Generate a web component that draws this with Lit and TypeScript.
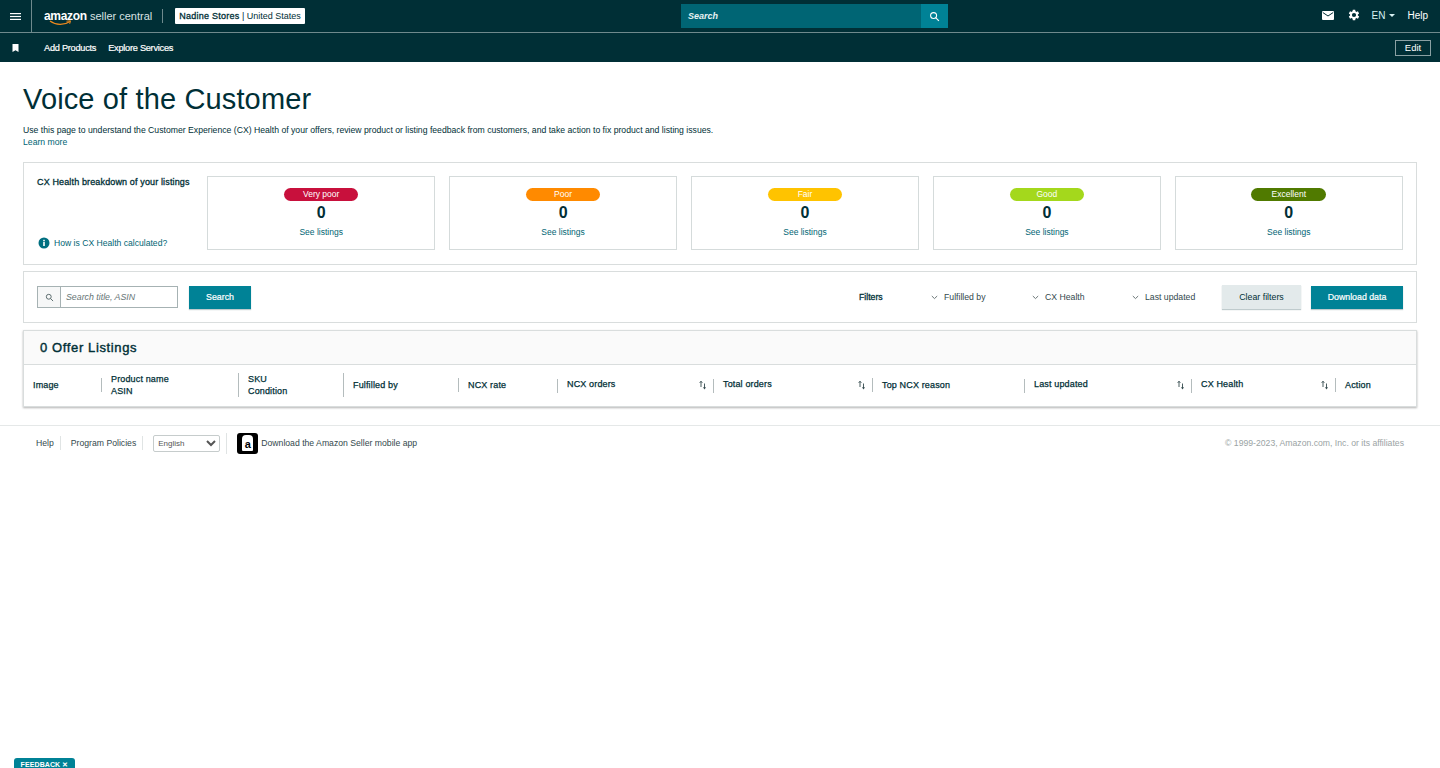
import { LitElement, html, css, svg } from "lit";
import { customElement } from "lit/decorators.js";

const HEALTH = [
  { label: "Very poor", color: "#c8103c" },
  { label: "Poor", color: "#ff8a00" },
  { label: "Fair", color: "#ffc300" },
  { label: "Good", color: "#a4d81c" },
  { label: "Excellent", color: "#507a00" },
];

// widths are the gaps between the column separators
const COLUMNS = [
  { width: 77, lines: ["Image"], first: true },
  { width: 137, lines: ["Product name", "ASIN"] },
  { width: 105, lines: ["SKU", "Condition"], tall: true },
  { width: 115, lines: ["Fulfilled by"], tall: true },
  { width: 99, lines: ["NCX rate"] },
  { width: 156, lines: ["NCX orders"], sort: true },
  { width: 159, lines: ["Total orders"], sort: true },
  { width: 152, lines: ["Top NCX reason"] },
  { width: 167, lines: ["Last updated"], sort: true },
  { width: 144, lines: ["CX Health"], sort: true },
  { width: 81, lines: ["Action"] },
];

const searchIcon = (size: number, color: string) => html`
  <svg width=${size} height=${size} viewBox="0 0 24 24" fill="none" stroke=${color} stroke-width="2.4">
    <circle cx="10" cy="10" r="6.5"></circle>
    <path d="M15 15l6.5 6.5"></path>
  </svg>
`;

const chevron = html`
  <svg class="chev" width="7" height="5" viewBox="0 0 7 5" fill="none" stroke="#6c7778" stroke-width="1">
    <path d="M.8 1l2.7 2.6L6.2 1"></path>
  </svg>
`;

const sortIcon = svg`
  <path d="M2 7V1.500M.7 2.800L2 1.200l1.300 1.600" stroke="#33494d" stroke-width=".9" fill="none"></path>
  <path d="M5.500 3.500V8" stroke="#33494d" stroke-width=".9" fill="none"></path>
  <path d="M4 7.200h3L5.500 9.500z" fill="#33494d"></path>
`;

@customElement("app-root")
export class AppRoot extends LitElement {
  static styles = css`
    :host {
      display: block;
      position: relative;
      min-height: 768px;
      overflow: hidden;
      background: #fff;
      color: #002f36;
      font-family: "Liberation Sans", Arial, sans-serif;
      font-size: 10px;
    }
    a {
      color: #006574;
      text-decoration: none;
    }

    .topbar {
      display: flex;
      align-items: center;
      height: 32px;
      background: #002f36;
      border-bottom: 1px solid #6f8a8d;
      color: #fff;
    }
    .burger {
      display: flex;
      align-items: center;
      justify-content: center;
      width: 31px;
      height: 32px;
      border-right: 1px solid #6f8a8d;
      box-sizing: content-box;
    }
    .logo {
      position: relative;
      margin-left: 12px;
      width: 118px;
      border-right: 1px solid #6f8a8d;
      height: 14px;
      display: flex;
      align-items: center;
      white-space: nowrap;
      font-size: 11px;
      color: #d9e2e3;
    }
    .logo b {
      font-size: 12px;
      color: #fff;
      letter-spacing: -0.3px;
      margin-right: 3px;
    }
    .smile {
      position: absolute;
      left: 0;
      top: 11px;
    }
    .store {
      margin-left: 12px;
      width: 130px;
      height: 16px;
      box-sizing: border-box;
      display: flex;
      align-items: center;
      justify-content: center;
      background: #fff;
      color: #002f36;
      border-radius: 1px;
      font-size: 9px;
      white-space: nowrap;
    }
    .store b {
      font-weight: 400;
      -webkit-text-stroke: 0.3px #002f36;
      letter-spacing: 0.25px;
    }
    .global-search {
      margin-left: 376px;
      display: flex;
      width: 267px;
      height: 24px;
    }
    .global-search span {
      flex: 1;
      display: flex;
      align-items: center;
      padding: 0 0 1px 7px;
      background: #006574;
      color: #e6f2f3;
      font-style: italic;
      font-weight: 700;
      font-size: 9px;
    }
    .global-search div {
      width: 27px;
      display: flex;
      align-items: center;
      justify-content: center;
      background: #008296;
    }
    .top-right {
      margin-left: auto;
      display: flex;
      align-items: center;
      padding: 0 12px 2px 0;
      font-size: 10px;
    }
    .top-right .lang {
      display: flex;
      align-items: center;
      gap: 4px;
      margin-left: 12px;
      color: #d8f1f3;
    }
    .top-right .help {
      margin-left: 12px;
    }
    .caret {
      width: 0;
      height: 0;
      border: 3px solid transparent;
      border-top-color: #d8f1f3;
      border-bottom-width: 0;
    }
    .icon-gap {
      margin-left: 14px;
      display: flex;
    }

    .subbar {
      display: flex;
      align-items: center;
      height: 29px;
      padding: 0 9px 0 12px;
      background: #002f36;
      color: #fff;
      font-size: 9.2px;
    }
    .subbar svg {
      margin-right: 25px;
    }
    .subbar span {
      margin-right: 12px;
      letter-spacing: -0.25px;
      -webkit-text-stroke: 0.2px #fff;
    }
    .edit {
      margin-left: auto;
      width: 36px;
      height: 16px;
      box-sizing: border-box;
      border: 1px solid #8aa0a3;
      display: flex;
      align-items: center;
      justify-content: center;
      font-size: 9.5px;
    }

    main {
      padding: 0 23px;
    }
    h1 {
      margin: 0;
      padding-top: 18px;
      font-size: 29px;
      line-height: 38px;
      font-weight: 400;
      letter-spacing: 0.14px;
    }
    .intro {
      margin: 6px 0 0;
      font-size: 8.66px;
      line-height: 12px;
    }

    .panel {
      border: 1px solid #d9dddd;
      box-sizing: border-box;
    }
    .health {
      margin-top: 14px;
      height: 103px;
      padding: 13px 13px 14px;
      display: flex;
    }
    .health-side {
      width: 170px;
      display: flex;
      flex-direction: column;
      justify-content: space-between;
      font-size: 8.6px;
    }
    .health-side strong {
      font-size: 9px;
      font-weight: 400;
      -webkit-text-stroke: 0.3px #002f36;
      letter-spacing: 0.14px;
      margin-top: 1px;
      white-space: nowrap;
    }
    .how {
      display: flex;
      align-items: center;
      gap: 4px;
      margin-bottom: 1px;
      padding-left: 1px;
      white-space: nowrap;
    }
    .health-boxes {
      flex: 1;
      display: grid;
      grid-template-columns: repeat(5, 1fr);
      gap: 13.5px;
    }
    .box {
      border: 1px solid #d5dbdb;
      display: flex;
      flex-direction: column;
      align-items: center;
      padding-top: 11px;
    }
    .pill {
      width: 74.6px;
      height: 13px;
      border-radius: 7px;
      color: #fff;
      font-size: 8.5px;
      line-height: 13px;
      text-align: center;
    }
    .count {
      font-size: 16px;
      font-weight: 700;
      line-height: 18px;
      margin-top: 3px;
    }
    .box a {
      margin-top: 5px;
      font-size: 8.5px;
    }

    .filters {
      margin-top: 6px;
      height: 52px;
      padding: 0 13px;
      display: flex;
      align-items: center;
    }
    .search-box {
      display: flex;
      width: 141px;
      height: 22px;
      box-sizing: border-box;
      border: 1px solid #a6b2b3;
    }
    .search-box div {
      width: 22px;
      display: flex;
      align-items: center;
      justify-content: center;
      background: #f6f7f7;
      border-right: 1px solid #a6b2b3;
    }
    .search-box span {
      padding-left: 5px;
      line-height: 20px;
      font-size: 8.8px;
      font-style: italic;
      color: #667475;
    }
    .btn {
      display: flex;
      align-items: center;
      justify-content: center;
      height: 23px;
      font-size: 8.8px;
      box-sizing: border-box;
      box-shadow: 0 1px 1px rgba(0, 47, 54, 0.25);
    }
    .btn.primary {
      background: #008296;
      color: #fff;
      -webkit-text-stroke: 0.2px #fff;
    }
    .btn.clear {
      width: 79px;
      height: 24px;
      background: #e3eaeb;
      color: #002f36;
    }
    .btn.go {
      width: 62px;
      margin-left: 11px;
    }
    .btn.download {
      width: 92px;
      margin-left: 10px;
    }
    .filter-set {
      margin-left: auto;
      display: grid;
      grid-template-columns: 72px 101px 100px 90px;
      align-items: center;
      font-size: 8.7px;
      color: #33494d;
    }
    .filter-set strong {
      font-weight: 400;
      color: #002f36;
      -webkit-text-stroke: 0.3px #002f36;
    }
    .filter-set span {
      display: flex;
      align-items: center;
      white-space: nowrap;
    }
    .chev {
      margin-right: 6px;
    }

    .listings {
      margin-top: 7px;
      height: 77px;
      box-shadow: 0 1px 2px rgba(0, 0, 0, 0.3);
    }
    .listings h2 {
      margin: 0;
      height: 33px;
      padding-left: 16px;
      background: #fafafa;
      border-bottom: 1px solid #d9dddd;
      font-size: 13px;
      line-height: 33px;
      font-weight: 400;
      -webkit-text-stroke: 0.4px #002f36;
      letter-spacing: 0.62px;
    }
    .cols {
      display: flex;
      height: 42px;
      box-sizing: border-box;
      padding-bottom: 2px;
      align-items: center;
    }
    .col {
      position: relative;
      box-sizing: border-box;
      padding: 0 0 0 10px;
      display: flex;
      font-size: 9px;
      line-height: 12px;
      letter-spacing: 0.15px;
      -webkit-text-stroke: 0.25px #002f36;
    }
    .col::before {
      content: "";
      position: absolute;
      left: 0;
      top: 50%;
      height: 14px;
      margin-top: -7px;
      width: 1px;
      background: #b4bcbd;
    }
    .col.first {
      padding-left: 9px;
    }
    .col.first::before {
      display: none;
    }
    .col.tall::before {
      height: 24px;
      margin-top: -12px;
    }
    .col.sort {
      margin-top: -2px;
    }
    .col.sort::before {
      margin-top: -5px;
    }
    .col svg {
      position: absolute;
      right: 6px;
      top: 2px;
    }

    footer {
      margin-top: 18px;
      border-top: 1px solid #e5e8e8;
      height: 34px;
      padding: 0 36px;
      display: flex;
      align-items: center;
      font-size: 8.66px;
      color: #33494d;
    }
    footer .link {
      padding-right: 6px;
      margin-right: 10px;
      border-right: 1px solid #e0e4e4;
      line-height: 14px;
    }
    footer select {
      width: 67px;
      height: 17px;
      margin-right: 6px;
      font: 8px "Liberation Sans", Arial, sans-serif;
      color: #555;
      background: #fff;
      border: 1px solid #c6cccc;
      border-radius: 2px;
    }
    .app {
      display: flex;
      align-items: center;
      gap: 3px;
      padding-left: 10px;
      border-left: 1px solid #e0e4e4;
    }
    .app-icon {
      position: relative;
      width: 21px;
      height: 21px;
      border-radius: 3px;
      background: #000;
      display: flex;
      align-items: center;
      justify-content: center;
    }
    .app-icon i {
      width: 11px;
      height: 16px;
      border-radius: 4px 4px 1px 1px;
      background: #fff;
      color: #000;
      font: 700 11px/19px "Liberation Sans", Arial, sans-serif;
      text-align: center;
    }
    .copyright {
      margin-left: auto;
      color: #9aa3a4;
    }

    .feedback {
      position: absolute;
      left: 14px;
      bottom: 0;
      width: 61px;
      height: 10px;
      overflow: hidden;
      border-radius: 3px 3px 0 0;
      background: #008296;
      color: #fff;
      font-size: 7px;
      font-weight: 700;
      line-height: 14px;
      text-align: center;
      letter-spacing: 0.1px;
    }
  `;

  render() {
    return html`
      <div class="topbar">
        <div class="burger">
          <svg width="11" height="7" viewBox="0 0 11 7" fill="#fff">
            <rect width="11" height="1.2"></rect>
            <rect y="2.900" width="11" height="1.200"></rect>
            <rect y="5.800" width="11" height="1.200"></rect>
          </svg>
        </div>
        <div class="logo">
          <b>amazon</b>seller central
          <svg class="smile" width="30" height="7" viewBox="0 0 30 7" fill="none">
            <path d="M6 1c6 4.500 14 4.500 20 .5" stroke="#f08a1d" stroke-width="1.200"></path>
            <path d="M22.500 1.200l4 -.4l-.8 3" stroke="#f08a1d" stroke-width="1"></path>
          </svg>
        </div>
        <div class="store"><b>Nadine Stores</b>&nbsp;| United States</div>
        <div class="global-search">
          <span>Search</span>
          <div>${searchIcon(11, "#fff")}</div>
        </div>
        <div class="top-right">
          <svg width="12" height="9" viewBox="0 0 12 9">
            <rect width="12" height="9" rx="1" fill="#fff"></rect>
            <path d="M.8 1.500L6 5l5.200 -3.500" fill="none" stroke="#002f36"></path>
          </svg>
          <span class="icon-gap">
            <svg width="12" height="12" viewBox="3 2 20 20" fill="#fff">
              <path d="M19.400 13a7.500 7.500 0 000-2l2.100-1.600-2-3.500-2.500 1a7.500 7.500 0 00-1.700-1L15 3.200h-4l-.4 2.700a7.500 7.500 0 00-1.700 1l-2.500-1-2 3.500L6.500 11a7.500 7.500 0 000 2l-2.100 1.600 2 3.500 2.500-1a7.500 7.500 0 001.700 1l.4 2.700h4l.4-2.700a7.500 7.500 0 001.700-1l2.500 1 2-3.500zM13 15.500a3.500 3.500 0 110-7 3.500 3.500 0 010 7z"></path>
            </svg>
          </span>
          <span class="lang">EN <i class="caret"></i></span>
          <span class="help">Help</span>
        </div>
      </div>
      <div class="subbar">
        <svg width="7" height="8" viewBox="0 0 7 8" fill="#fff"><path d="M.5 0h6v8L3.500 6.300.5 8z"></path></svg>
        <span>Add Products</span>
        <span>Explore Services</span>
        <div class="edit">Edit</div>
      </div>

      <main>
        <h1>Voice of the Customer</h1>
        <p class="intro">
          Use this page to understand the Customer Experience (CX) Health of your offers, review product or listing
          feedback from customers, and take action to fix product and listing issues.<br />
          <a href="#">Learn more</a>
        </p>

        <section class="panel health">
          <div class="health-side">
            <strong>CX Health breakdown of your listings</strong>
            <a class="how" href="#">
              <svg width="12" height="12" viewBox="0 0 12 12">
                <circle cx="6" cy="6" r="5.500" fill="#006f80"></circle>
                <rect x="5.200" y="5" width="1.600" height="4" fill="#fff"></rect>
                <rect x="5.200" y="2.800" width="1.600" height="1.500" fill="#fff"></rect>
              </svg>
              How is CX Health calculated?
            </a>
          </div>
          <div class="health-boxes">
            ${HEALTH.map(
              (h) => html`
                <div class="box">
                  <div class="pill" style="background:${h.color}">${h.label}</div>
                  <div class="count">0</div>
                  <a href="#">See listings</a>
                </div>
              `
            )}
          </div>
        </section>

        <section class="panel filters">
          <div class="search-box">
            <div>${searchIcon(9, "#4d5f61")}</div>
            <span>Search title, ASIN</span>
          </div>
          <div class="btn primary go">Search</div>
          <div class="filter-set">
            <strong>Filters</strong>
            <span>${chevron}Fulfilled by</span>
            <span>${chevron}CX Health</span>
            <span>${chevron}Last updated</span>
          </div>
          <div class="btn clear">Clear filters</div>
          <div class="btn primary download">Download data</div>
        </section>

        <section class="panel listings">
          <h2>0 Offer Listings</h2>
          <div class="cols">
            ${COLUMNS.map(
              (c) => html`
                <div
                  class="col ${c.first ? "first" : ""} ${c.tall ? "tall" : ""} ${c.sort ? "sort" : ""}"
                  style="width:${c.width}px"
                >
                  <div>${c.lines.map((l) => html`<div>${l}</div>`)}</div>
                  ${c.sort ? html`<svg width="8" height="10" viewBox="0 0 8 10">${sortIcon}</svg>` : ""}
                </div>
              `
            )}
          </div>
        </section>
      </main>

      <footer>
        <span class="link">Help</span>
        <span class="link">Program Policies</span>
        <select><option>English</option></select>
        <div class="app">
          <div class="app-icon"><i>a</i></div>
          Download the Amazon Seller mobile app
        </div>
        <span class="copyright">© 1999-2023, Amazon.com, Inc. or its affiliates</span>
      </footer>

      <div class="feedback">FEEDBACK ✕</div>
    `;
  }
}
